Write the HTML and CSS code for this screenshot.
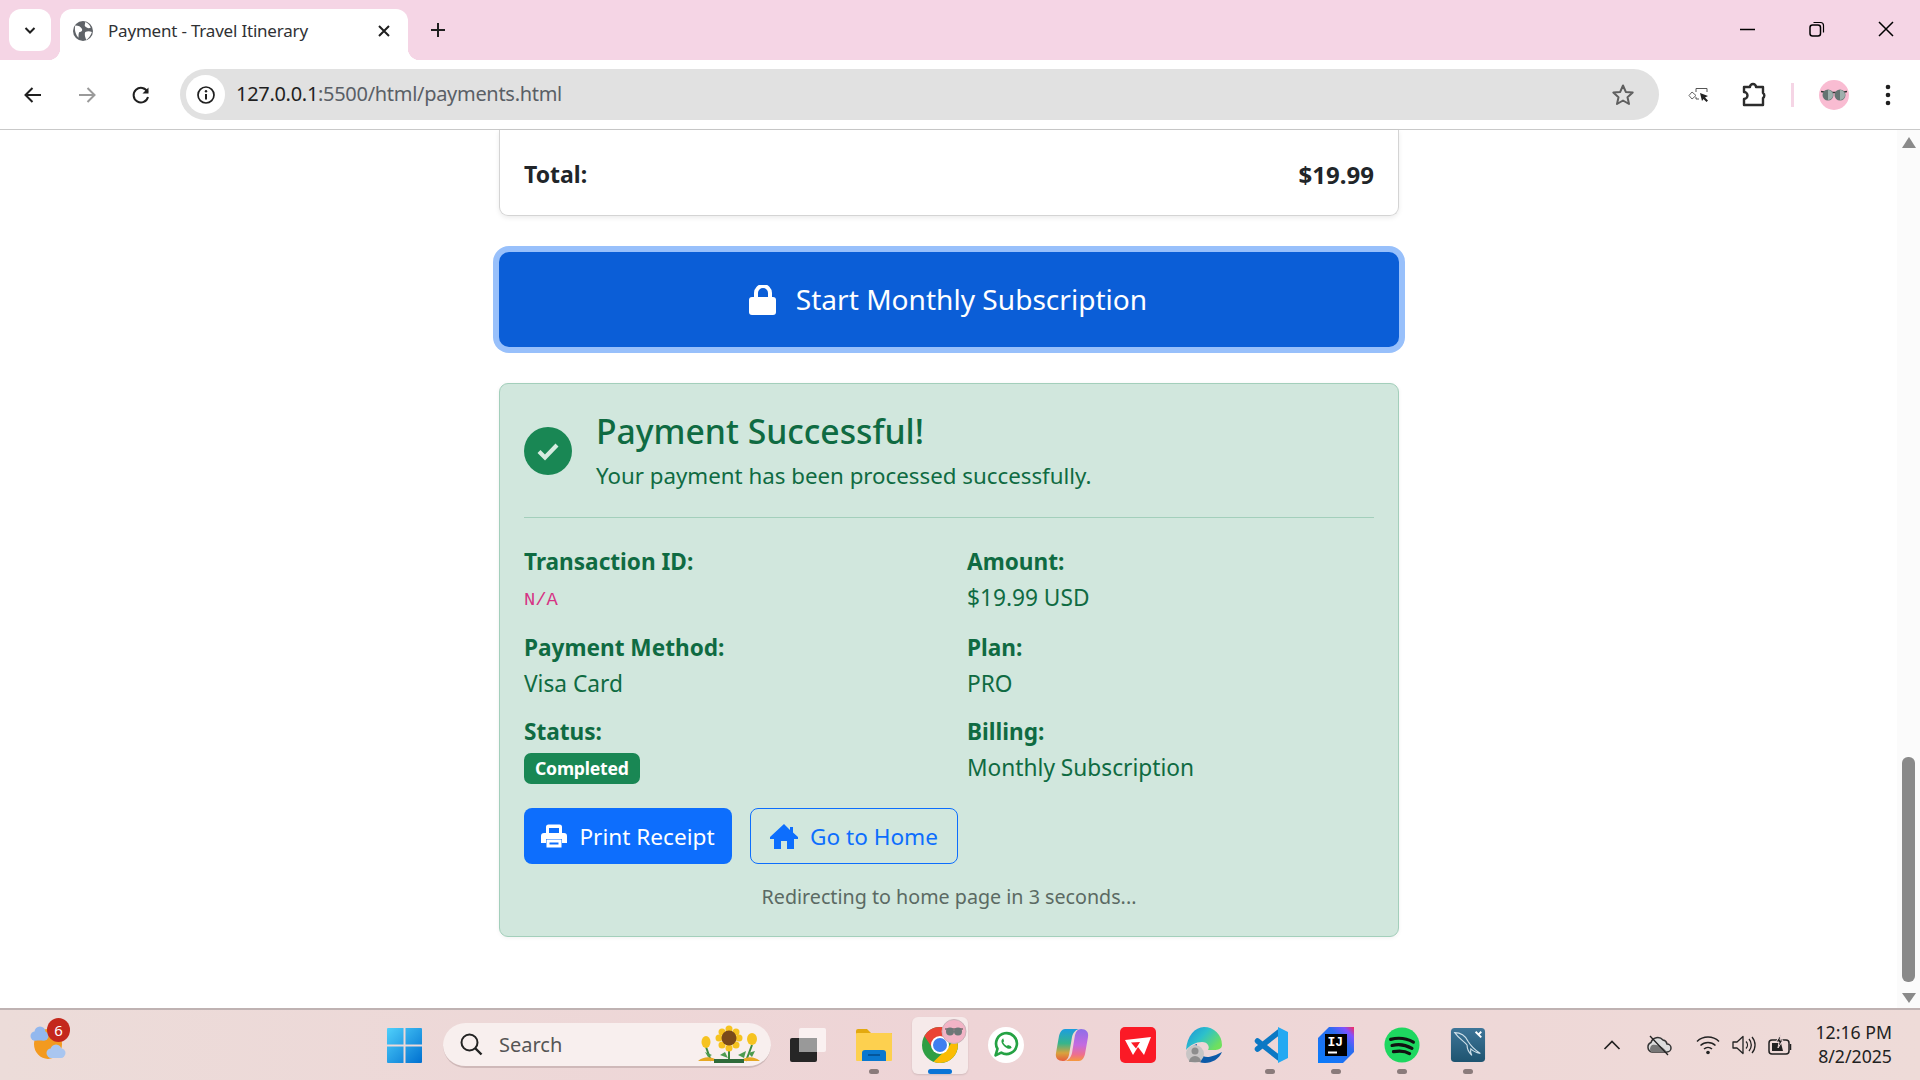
FILE: index.html
```html
<!DOCTYPE html>
<html lang="en">
<head>
  <title>Payment - Travel Itinerary</title>
  <meta charset="utf-8"/>
  <link rel="stylesheet" href="styles.css">
</head>
<body>
<div id="screen">

  <!-- tab strip -->
  <div class="tabstrip">
    <div class="tabsearch">
      <svg width="16" height="16" viewBox="0 0 16 16"><path d="M3.5 6l4.500 4.500L12.500 6" fill="none" stroke="#1f1f1f" stroke-width="2"/></svg>
    </div>
    <div class="tab">
      <svg class="favicon" width="20" height="20" viewBox="0 0 18 18"><circle cx="9" cy="9" r="9" fill="#5f6368"/><path d="M2 4c3 0 5 1 6 3s-1 3-2 3-1 3-1 5C3 13 1 9 2 4zM11 1c2 1 4 2 5 5-2 1-4 0-5-1s0-2 0-4zM11 10c2-1 4-1 6 0-1 3-3 6-5 7-1-2-2-5-1-7z" fill="#fff"/></svg>
      <span class="tabtitle">Payment - Travel Itinerary</span>
      <svg class="tabclose" width="14" height="14" viewBox="0 0 14 14"><path d="M2 2l10 10M12 2L2 12" stroke="#1f1f1f" stroke-width="2"/></svg>
    </div>
    <svg class="newtab" width="16" height="16" viewBox="0 0 16 16"><path d="M8 1v14M1 8h14" stroke="#1f1f1f" stroke-width="2"/></svg>
    <div class="wincontrols">
      <svg width="16" height="16" viewBox="0 0 16 16"><path d="M0 8.500h15" stroke="#000" stroke-width="1.500"/></svg>
      <svg width="16" height="16" viewBox="0 0 16 16"><rect x="1" y="4" width="10.500" height="11" rx="2.500" fill="none" stroke="#000" stroke-width="1.500"/><path d="M4.500 1.500h7a3 3 0 0 1 3 3v7" fill="none" stroke="#000" stroke-width="1.200"/></svg>
      <svg width="16" height="16" viewBox="0 0 16 16"><path d="M1 1l14 14M15 1L1 15" stroke="#000" stroke-width="1.500"/></svg>
    </div>
  </div>

  <!-- toolbar -->
  <div class="toolbar">
    <svg class="navbtn first" width="20" height="20" viewBox="0 0 20 20"><path d="M18 10H3M9.500 3L2.500 10l7 7" fill="none" stroke="#1f1f1f" stroke-width="2"/></svg>
    <svg class="navbtn" width="20" height="20" viewBox="0 0 20 20"><path d="M2 10h15M10.500 3l7 7-7 7" fill="none" stroke="#9a9a9a" stroke-width="2"/></svg>
    <svg class="navbtn" width="20" height="20" viewBox="0 0 20 20"><path d="M16.500 7A7.300 7.300 0 1 0 17 12" fill="none" stroke="#1f1f1f" stroke-width="2"/><path d="M17.500 2.500v6h-6z" fill="#1f1f1f"/></svg>
    <div class="omnibox">
      <div class="siteinfo">
        <svg width="20" height="20" viewBox="0 0 20 20"><circle cx="10" cy="10" r="8" fill="none" stroke="#1f1f1f" stroke-width="1.700"/><path d="M10 9v5.500" stroke="#1f1f1f" stroke-width="2"/><circle cx="10" cy="6.300" r="1.200" fill="#1f1f1f"/></svg>
      </div>
      <span class="url"><span class="urlhost">127.0.0.1</span>:5500/html/payments.html</span>
      <svg class="star" width="24" height="24" viewBox="0 0 24 24"><path d="M12 2.500l2.800 6.400 6.900.7-5.200 4.600 1.500 6.800-6-3.500-6 3.500 1.500-6.800-5.200-4.600 6.900-.7z" fill="none" stroke="#5f5f5f" stroke-width="2" stroke-linejoin="round"/></svg>
    </div>
    <svg class="ext-cursor" width="22" height="16" viewBox="0 0 22 16"><path d="M8 5V1.500h11V5M8 10v2h3" fill="none" stroke="#555" stroke-width="1"/><path d="M4 5l4 3.500-4 3.500-3-3.500z" fill="none" stroke="#666" stroke-width="1"/><path d="M12 6l8 3-3 1.500 3 3-1.500 1.500-3-3L14 14z" fill="#222"/></svg>
    <svg class="ext-puzzle" width="26" height="26" viewBox="0 0 26 26"><path d="M3 5h6a3 3 0 0 1 6 0h7v6a3 3 0 0 1 0 5v7H3v-6a3.500 3.500 0 0 0 0-7z" fill="none" stroke="#2c2c2c" stroke-width="2.400" stroke-linejoin="round"/></svg>
    <div class="tooldivider"></div>
    <div class="avatar">
      <svg width="26" height="12" viewBox="0 0 26 12"><path d="M0 2.500l3 .5M23 3l3-.5M11 3.500h4" stroke="#333" stroke-width="1.500"/><circle cx="7" cy="6" r="5.500" fill="#647472"/><circle cx="19" cy="6" r="5.500" fill="#647472"/><path d="M7 1a5 5 0 0 1 0 10zM19 1a5 5 0 0 1 0 10z" fill="#9fb0ad"/></svg>
    </div>
    <svg class="menu" width="6" height="24" viewBox="0 0 6 24"><circle cx="3" cy="4" r="2.300" fill="#1f1f1f"/><circle cx="3" cy="12" r="2.300" fill="#1f1f1f"/><circle cx="3" cy="20" r="2.300" fill="#1f1f1f"/></svg>
  </div>

  <!-- page -->
  <div class="viewport">
    <div class="page">
      <div class="summary">
        <strong>Total:</strong>
        <strong class="total-amount">$19.99</strong>
      </div>

      <div class="paybtn">
        <svg class="lockicon" width="28" height="30" viewBox="0 0 28 30"><path d="M7 13V8a7 7 0 0 1 14 0v5" fill="none" stroke="#fff" stroke-width="4"/><rect x="0" y="12" width="27" height="18" rx="3" fill="#fff"/></svg>
        <span>Start Monthly Subscription</span>
      </div>

      <div class="success">
        <div class="success-head">
          <div class="checkcircle">
            <svg width="24" height="20" viewBox="0 0 24 20"><path d="M3 10.500l6 6L21 4" fill="none" stroke="#d6ebe0" stroke-width="4.200"/></svg>
          </div>
          <div>
            <h3>Payment Successful!</h3>
            <p>Your payment has been processed successfully.</p>
          </div>
        </div>
        <hr>
        <div class="details">
          <div class="detail">
            <strong>Transaction ID:</strong>
            <code>N/A</code>
          </div>
          <div class="detail">
            <strong>Amount:</strong>
            <span>$19.99 USD</span>
          </div>
          <div class="detail">
            <strong>Payment Method:</strong>
            <span>Visa Card</span>
          </div>
          <div class="detail">
            <strong>Plan:</strong>
            <span>PRO</span>
          </div>
          <div class="detail">
            <strong>Status:</strong>
            <span class="badge">Completed</span>
          </div>
          <div class="detail">
            <strong>Billing:</strong>
            <span>Monthly Subscription</span>
          </div>
        </div>
        <div class="actions">
          <div class="btn btn-primary">
            <svg width="26" height="25" viewBox="0 0 26 25"><path d="M5 9V3a2.500 2.500 0 0 1 2.500-2.500h11A2.500 2.500 0 0 1 21 3v6h-3V4H8v5z" fill="#fff"/><path d="M3 9h20a3 3 0 0 1 3 3v7h-5v-4H5v4H0v-7a3 3 0 0 1 3-3z" fill="#fff"/><path d="M7 17h12v5H7z" fill="none" stroke="#fff" stroke-width="3"/></svg>
            <span>Print Receipt</span>
          </div>
          <div class="btn btn-outline">
            <svg width="28" height="25" viewBox="0 0 28 25"><path d="M14 0L0 13v2h4v10h7v-8h6v8h7V15h4v-2l-5-4.500V3h-3v3z" fill="#0d6efd"/></svg>
            <span>Go to Home</span>
          </div>
        </div>
        <div class="redirect">Redirecting to home page in 3 seconds...</div>
      </div>
    </div>

    <div class="scrollbar">
      <div class="arrow-up"></div>
      <div class="track"><div class="thumb"></div></div>
      <div class="arrow-down"></div>
    </div>
  </div>

  <!-- windows taskbar -->
  <div class="taskbar">
    <div class="widget">
      <svg width="42" height="44" viewBox="0 0 42 44"><ellipse cx="18" cy="25" rx="14" ry="15" fill="#f39a1f"/><g fill="#93b8ee"><circle cx="5" cy="17" r="4.500"/><circle cx="10" cy="13" r="5.500"/><circle cx="14" cy="17" r="4.500"/><rect x="2" y="16" width="14" height="5.500" rx="2.500"/></g><g fill="#a9c6f0"><circle cx="21" cy="34" r="4.500"/><circle cx="26" cy="31" r="5.500"/><circle cx="31" cy="34" r="4.500"/><rect x="18" y="33" width="16" height="6" rx="3"/></g></svg>
      <div class="widgetbadge">6</div>
    </div>

    <div class="apps">
      <svg class="startlogo" width="35" height="35" viewBox="0 0 35 35"><defs><linearGradient id="winblue" x1="0" y1="0" x2="1" y2="1"><stop offset="0" stop-color="#4fd0fb"/><stop offset="1" stop-color="#0070d0"/></linearGradient></defs><path d="M0 1a1 1 0 0 1 1-1h15.500v16.500H0zM18.500 0H34a1 1 0 0 1 1 1v15.500H18.500zM0 18.500h16.500V35H1a1 1 0 0 1-1-1zM18.500 18.500H35V34a1 1 0 0 1-1 1H18.500z" fill="url(#winblue)"/></svg>
      <div class="searchbox">
        <svg width="24" height="24" viewBox="0 0 24 24"><circle cx="10.500" cy="10.500" r="8" fill="none" stroke="#222" stroke-width="2"/><path d="M16 16l6.500 6.500" stroke="#222" stroke-width="2.400"/></svg>
        <span>Search</span>
        <svg class="sunflowers" width="64" height="38" viewBox="0 0 62 38"><path d="M31 22v14M8 22l5 14M54 20l-6 16" stroke="#3c8a3e" stroke-width="2" fill="none"/><path d="M14 30l-7-3 3 5zM22 30l8 3-3-6zM40 30l8-4-2 7zM50 28l7-2-3 6z" fill="#4d9b50"/><path d="M0 36c6-5 14-5 20 0zM42 36c6-5 14-5 20 0z" fill="#e6a823"/><g fill="#f6c320"><circle cx="31" cy="4" r="3.500"/><circle cx="38" cy="7" r="3.500"/><circle cx="41" cy="13" r="3.500"/><circle cx="38" cy="20" r="3.500"/><circle cx="31" cy="23" r="3.500"/><circle cx="24" cy="20" r="3.500"/><circle cx="21" cy="13" r="3.500"/><circle cx="24" cy="7" r="3.500"/><ellipse cx="8" cy="17" rx="4.500" ry="6"/><ellipse cx="54" cy="14" rx="5" ry="6"/></g><circle cx="31" cy="13" r="7.500" fill="#7a4a1a"/><path d="M16 38v-4h30v4z" fill="#2f6b3a"/></svg>
      </div>
      <div class="appicon">
        <svg width="36" height="34" viewBox="0 0 36 34"><rect x="0" y="10" width="27" height="24" rx="2" fill="#262626"/><rect x="9" y="0" width="27" height="24" rx="2" fill="#fbf6f6" opacity=".85"/><rect x="9" y="10" width="18" height="14" fill="#999"/></svg>
      </div>
      <div class="appicon running">
        <svg width="36" height="32" viewBox="0 0 36 32"><path d="M0 2a2 2 0 0 1 2-2h9l4 4h20a1 1 0 0 1 1 1v3H0z" fill="#e3a90f"/><rect x="0" y="4" width="36" height="28" rx="1" fill="#fdd04f"/><path d="M6 32V24a3 3 0 0 1 3-3h18a3 3 0 0 1 3 3v8z" fill="#0a78cf"/><path d="M12 26h12" stroke="#04569b" stroke-width="2"/></svg>
      </div>
      <div class="appicon active">
        <svg width="56" height="57" viewBox="0 0 56 57"><circle cx="28" cy="28" r="18" fill="#2f9e44"/><path d="M44.100 20A18 18 0 0 0 12.400 19L21 32A8 8 0 0 1 28 20z" fill="#ea4335"/><path d="M44.100 20A18 18 0 0 1 21.500 44.800L34.900 32z" fill="#fbbc04"/><circle cx="28" cy="28" r="9" fill="#fff"/><circle cx="28" cy="28" r="7" fill="#3f7ff0"/><circle cx="42" cy="14.500" r="12" fill="#f2b4c6" stroke="#c9b3b8"/><path d="M33 12h18" stroke="#444"/><circle cx="38" cy="14.500" r="4" fill="#6d7777"/><circle cx="46" cy="14.500" r="4" fill="#6d7777"/></svg>
      </div>
      <div class="appicon">
        <svg width="36" height="36" viewBox="0 0 38 38"><circle cx="19" cy="19" r="19" fill="#fff"/><path d="M8 30l2-7a11 11 0 1 1 4 4z" fill="none" stroke="#25a244" stroke-width="2.800" stroke-linejoin="round"/><path d="M15 13c-2 2 0 6 3 8s5 3 7 1l-1-2-3-1-1 1c-2-1-3-2-4-4l1-1-1-3z" fill="#25a244"/></svg>
      </div>
      <div class="appicon">
        <svg width="34" height="34" viewBox="0 0 34 34"><defs><linearGradient id="copa" x1="0" y1="0" x2="0" y2="1"><stop offset="0" stop-color="#1b9de0"/><stop offset=".45" stop-color="#37b58b"/><stop offset=".75" stop-color="#d9a23d"/><stop offset="1" stop-color="#e85d3d"/></linearGradient><linearGradient id="copb" x1="0" y1="0" x2="0" y2="1"><stop offset="0" stop-color="#8c6fe8"/><stop offset=".5" stop-color="#c46be0"/><stop offset=".8" stop-color="#ee6f8e"/><stop offset="1" stop-color="#f59a3c"/></linearGradient></defs><path d="M10 1h14c-4 1-6 4-7 8l-3 18c-1 4-3 6-6 6-5 0-8-3-7-8L4 8c1-4 3-7 6-7z" fill="url(#copa)"/><path d="M24 33H10c4-1 6-4 7-8l3-18c1-4 3-6 6-6 5 0 8 3 7 8l-3 17c-1 4-3 7-6 7z" fill="url(#copb)"/></svg>
      </div>
      <div class="appicon">
        <svg width="36" height="36" viewBox="0 0 36 36"><rect width="36" height="36" rx="5" fill="#fb1a26"/><path d="M5 13l26-3-7 18-6-8-5 8zM11 15.500l5 6 4-6.500z" fill="#fff" fill-rule="evenodd"/></svg>
      </div>
      <div class="appicon">
        <svg width="36" height="36" viewBox="0 0 36 36"><defs><linearGradient id="edgea" x1="0" y1="0" x2="1" y2=".6"><stop offset="0" stop-color="#1b8fd8"/><stop offset=".5" stop-color="#2cc0cc"/><stop offset="1" stop-color="#6fe05e"/></linearGradient></defs><path d="M18 0a18 18 0 0 1 18 18c0 4-4 5-8 5h-6c2-3 0-8-6-8-6 0-12 3-16 8C1 9 9 0 18 0z" fill="url(#edgea)"/><path d="M36 25c-3 7-10 11-17 11C11 36 5 31 4 24c1-3 3-6 7-7-2 8 5 14 12 13 5-1 9-3 13-5z" fill="#0c5aa8"/><circle cx="9" cy="27" r="9" fill="#c8c5c5"/><circle cx="9" cy="24" r="3.500" fill="#8d8d8d"/><path d="M3 35a6 6 0 0 1 12 0z" fill="#8d8d8d"/></svg>
      </div>
      <div class="appicon running">
        <svg width="36" height="36" viewBox="0 0 36 36"><path d="M27 5L5.500 22M27 31L5.500 14" stroke="#0b78c4" stroke-width="5.500" stroke-linecap="round"/><path d="M26 0l10 5v26l-10 5z" fill="#23a9f2"/></svg>
      </div>
      <div class="appicon running">
        <svg width="36" height="36" viewBox="0 0 36 36"><defs><linearGradient id="ija" x1="0" y1="1" x2="1" y2="0"><stop offset="0" stop-color="#087cfa"/><stop offset=".65" stop-color="#2a6cf0"/><stop offset=".85" stop-color="#7f52ff"/><stop offset="1" stop-color="#fe2857"/></linearGradient></defs><path d="M11 0h25v25L25 36H0V11z" fill="url(#ija)"/><rect x="7" y="7" width="22" height="22" fill="#000"/><text class="ijtext" x="9.500" y="18.500">IJ</text><rect x="10" y="24.500" width="9" height="2" fill="#fff"/></svg>
      </div>
      <div class="appicon running">
        <svg width="36" height="36" viewBox="0 0 38 38"><circle cx="19" cy="19" r="18.500" fill="#1ed760"/><path d="M7 13c8-2 17-1 24 3M8.500 19.500c7-2 14-1 21 3M10 26c6-1 12-1 17 2" fill="none" stroke="#111" stroke-width="3.400" stroke-linecap="round"/></svg>
      </div>
      <div class="appicon running">
        <svg width="36" height="36" viewBox="0 0 38 38"><defs><linearGradient id="sqla" x1="0" y1="0" x2="0" y2="1"><stop offset="0" stop-color="#3e7598"/><stop offset="1" stop-color="#1e5470"/></linearGradient></defs><rect x="1" y="1" width="36" height="36" rx="4" fill="url(#sqla)"/><path d="M5 6c6 0 11 3 14 9 3 5 7 9 13 13-4-1-7-2-10-5-1 3 0 5 1 7-3-3-5-7-5-11-3-4-9-7-13-13z" fill="none" stroke="#cfe0ea" stroke-width="1.200"/><path d="M27 5l6 6M33 5l-3 3" stroke="#fff" stroke-width="2"/></svg>
      </div>
    </div>

    <div class="tray">
      <svg class="chevron" width="18" height="10" viewBox="0 0 18 10"><path d="M1.500 9L9 1.500 16.500 9" fill="none" stroke="#222" stroke-width="1.700"/></svg>
      <svg class="onedrive" width="26" height="22" viewBox="0 0 26 22"><path d="M6 18a5 5 0 0 1-1-9.500A7 7 0 0 1 17 6a5 5 0 0 1 4 4 4 4 0 0 1 0 8z" fill="#dcdcdc" stroke="#333" stroke-width="1.500"/><path d="M5 18a5 5 0 0 1 1-7c6-1 11 2 15 7z" fill="#777"/><path d="M4 2l18 19" stroke="#222" stroke-width="1.300"/></svg>
      <svg class="wifi" width="24" height="20" viewBox="0 0 24 20"><path d="M1 6.500a16 16 0 0 1 22 0M4.500 10.500a11 11 0 0 1 15 0M8 14a6 6 0 0 1 8 0" fill="none" stroke="#222" stroke-width="1.500"/><circle cx="12" cy="17.500" r="1.800" fill="#222"/></svg>
      <svg class="volume" width="24" height="20" viewBox="0 0 24 20"><path d="M1 7h4l6-5.500v17L5 13H1z" fill="none" stroke="#222" stroke-width="1.300" stroke-linejoin="round"/><path d="M14 6.500a5 5 0 0 1 0 7M17 4a9 9 0 0 1 0 12M20 2a12 12 0 0 1 0 16" fill="none" stroke="#222" stroke-width="1.300"/></svg>
      <svg class="battery" width="24" height="22" viewBox="0 0 24 22"><rect x="1" y="6" width="20" height="14" rx="3" fill="none" stroke="#222" stroke-width="1.500"/><path d="M22.500 10v6" stroke="#222" stroke-width="1.500"/><path d="M4 9h9l2 8H4z" fill="#222"/><path d="M13 0l-5 8h3l-1 6 5-8h-3z" fill="#222" stroke="#efdada"/></svg>
      <div class="clock">
        <div>12:16 PM</div>
        <div>8/2/2025</div>
      </div>
    </div>
  </div>
</div>
</body>
</html>
```

FILE: styles.css
```css
*{margin:0; padding:0; box-sizing:border-box;}
html, body{width:1920px; height:1080px; overflow:hidden;}
body{font-family:"Noto Sans", "Open Sans", sans-serif; background:#fff; color:#212529;}
svg{display:block; flex:none;}

#screen{display:flex; flex-direction:column; height:1080px;}

/* tab strip */
.tabstrip{height:60px; background:#f5d5e5; display:flex; align-items:flex-start; flex:none;}
.tabsearch{width:42px; height:42px; margin:9px 0 0 9px; background:#fff; border-radius:12px; display:flex; align-items:center; justify-content:center;}
.tab{width:348px; height:51px; margin:9px 0 0 9px; background:#fff; border-radius:12px 12px 0 0; display:flex; align-items:center; padding:0 17px 8px 13px; position:relative;}
.tab:before, .tab:after{content:""; position:absolute; bottom:0; width:12px; height:12px;}
.tab:before{left:-12px; background:radial-gradient(circle at 0 0, #f5d5e5 12px, #fff 12.5px);}
.tab:after{right:-12px; background:radial-gradient(circle at 100% 0, #f5d5e5 12px, #fff 12.5px);}
.favicon{margin-right:15px;}
.tabtitle{font-size:17px; color:#303134; letter-spacing:-.2px; flex:1; white-space:nowrap;}
.newtab{margin:22px 0 0 22px;}
.wincontrols{margin-left:auto; display:flex; gap:53px; padding:21px 26px 0 0;}

/* toolbar */
.toolbar{height:70px; background:#fff; border-bottom:1px solid #c9c9c9; display:flex; align-items:center; flex:none;}
.navbtn{margin-left:34px;}
.navbtn.first{margin-left:23px;}
.omnibox{width:1479px; height:51px; margin-left:29px; background:#e1e1e1; border-radius:26px; display:flex; align-items:center; padding:0 6px;}
.siteinfo{width:39px; height:39px; background:#fff; border-radius:50%; display:flex; align-items:center; justify-content:center;}
.url{font-size:20px; color:#5a5f66; margin-left:11px; padding-bottom:2px; letter-spacing:-.3px;}
.urlhost{color:#1f1f1f;}
.star{margin-left:auto; margin-right:18px;}
.ext-cursor{margin-left:29px;}
.ext-puzzle{margin-left:31px;}
.tooldivider{width:3px; height:24px; background:#f5d5e5; margin-left:24px;}
.avatar{width:30px; height:30px; margin-left:25px; border-radius:50%; background:#f9bcd2; display:flex; align-items:center; justify-content:center;}
.menu{margin-left:36px;}

/* page area */
.viewport{flex:1; display:flex; min-height:0; background:#fff;}
.page{flex:1; padding:0 498px 0 499px; font-size:22px; line-height:1.5;}
strong{font-weight:700;}

.summary{height:86px; border:1px solid #d4d4d4; border-top:none; border-radius:0 0 9px 9px; box-shadow:0 2px 5px rgba(0,0,0,.08); display:flex; justify-content:space-between; align-items:center; padding:4px 24px 0 24px; color:#212529; font-size:23px;}
.total-amount{font-size:24px;}

.paybtn{height:95px; margin-top:36px; background:#0b5ed7; border-radius:10px; box-shadow:0 0 0 6px #98c0fb; color:#fff; display:flex; align-items:center; justify-content:center; font-size:28.1px; gap:19px;}
.lockicon{margin-left:-2px;}

.success{height:554px; margin-top:36px; background:#d1e7dd; border:1px solid #a3cfbb; border-radius:9px; padding:0 24px; color:#0f6b42; box-shadow:0 1px 4px rgba(0,0,0,.06);}
.success-head{display:flex; align-items:center; padding-top:25px;}
.checkcircle{width:48px; height:48px; border-radius:50%; background:#198754; display:flex; align-items:center; justify-content:center; margin-right:24px;}
.success h3{font-size:33.7px; font-weight:500; line-height:44px; margin-bottom:7px; color:#0f6b42;}
.success p{font-size:22.3px; line-height:32px;}
hr{border:none; border-top:1px solid #a3cfbb; margin-top:25px;}

.details{display:grid; grid-template-columns:443px 1fr; margin-top:26px;}
.detail{height:85px; display:flex; flex-direction:column; align-items:flex-start;}
.detail:nth-child(-n+2){height:86px;}
.detail:nth-child(3), .detail:nth-child(4){height:84px;}
.detail strong{font-size:22.6px; line-height:36px;}
.detail span{font-size:22.7px; line-height:36px;}
.detail code{font-family:"Liberation Mono", monospace; font-size:18.8px; color:#d63384; line-height:40px;}
.detail .badge{background:#198754; color:#fff; font-weight:700; border-radius:7px; line-height:31px; font-size:17.6px; padding:0 11px; margin-top:3px; letter-spacing:-.2px;}

.actions{display:flex; gap:18px; margin-top:9px;}
.btn{width:208px; height:56px; border-radius:8px; display:flex; align-items:center; justify-content:center; font-size:22.6px; gap:12px;}
.btn span{padding-top:2px;}
.btn-primary{background:#0d6efd; color:#fff;}
.btn-outline{border:1.5px solid #0d6efd; color:#0d6efd;}

.redirect{text-align:center; font-size:19.7px; color:#5b6a63; margin-top:18px;}

/* scrollbar */
.scrollbar{width:23px; background:#fbfbfb; display:flex; flex-direction:column; align-items:center; flex:none;}
.arrow-up{width:0; height:0; border:7px solid transparent; border-top:none; border-bottom:11px solid #8a8a8a; margin-top:7px;}
.arrow-down{width:0; height:0; border:7px solid transparent; border-bottom:none; border-top:10px solid #8a8a8a; margin-bottom:5px;}
.track{flex:1; width:100%; display:flex; flex-direction:column; justify-content:flex-end; align-items:center; padding-bottom:11px;}
.thumb{width:13px; height:225px; background:#8a8a8a; border-radius:6px;}

/* taskbar */
.taskbar{height:72px; background:linear-gradient(90deg, #ecdcd9, #eed4d6 50%, #eedbd8); border-top:2px solid #bfb2b2; display:flex; align-items:center; flex:none; position:relative;}
.widget{width:42px; height:44px; margin-left:30px; margin-top:-8px; position:relative;}
.widgetbadge{position:absolute; left:17px; top:-1px; width:23px; height:24px; border-radius:50%; background:#c4281c; color:#fff; font-size:15px; line-height:24px; text-align:center;}
.apps{display:flex; align-items:center; margin-left:315px;}
.startlogo{margin-right:21px;}
.searchbox{width:328px; height:45px; background:#f8efee; border-radius:23px; border-bottom:2px solid #cfb9b9; display:flex; align-items:center; padding:0 10px 0 16px; margin-right:9px;}
.searchbox span{font-size:20px; color:#555; margin-left:16px;}
.sunflowers{margin-left:auto;}
.appicon{width:56px; height:57px; margin-right:10px; display:flex; align-items:center; justify-content:center; position:relative; border-radius:6px;}
.appicon.running:after{content:""; position:absolute; bottom:0; left:23px; width:10px; height:5px; border-radius:3px; background:#8a7b7b;}
.appicon.active{background:#f6eaea; box-shadow:0 1px 2px rgba(0,0,0,.12);}
.appicon.active:after{content:""; position:absolute; bottom:0; left:16px; width:24px; height:5px; border-radius:3px; background:#0a74d6;}
.ijtext{font-family:"Liberation Mono", monospace; font-size:13px; font-weight:700; fill:#fff;}

.tray{margin-left:auto; display:flex; align-items:center; padding-right:28px;}
.chevron{margin-right:25px;}
.onedrive{margin-right:24px;}
.wifi{margin-right:12px;}
.volume{margin-right:12px;}
.battery{margin-right:23px;}
.clock{font-size:17.7px; line-height:24px; text-align:right; color:#222; padding-bottom:3px;}
```
